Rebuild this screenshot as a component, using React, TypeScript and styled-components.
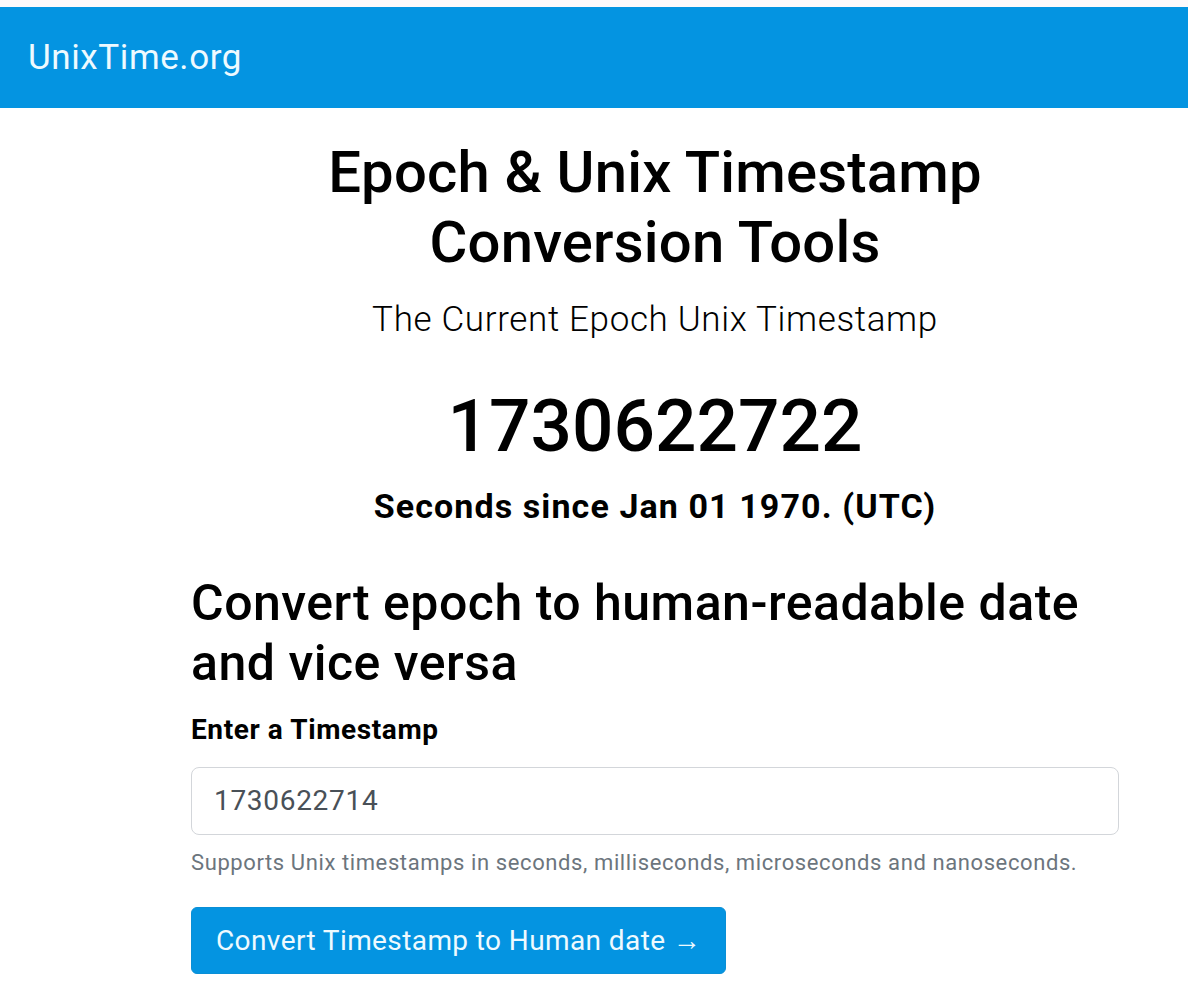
import React from "react";
import styled, { createGlobalStyle } from "styled-components";

const Global = createGlobalStyle`
  html, body { margin: 0; padding: 0; background: #ffffff; }
  body { font-family: Roboto, "Noto Sans", "Liberation Sans", sans-serif; color: #000; }
  * { box-sizing: border-box; }
`;

const Page = styled.div`
  padding-top: 7px;
  background: #fdf9fb;
  min-height: 993px;
`;

const Navbar = styled.header`
  height: 101px;
  background: #0494e1;
  display: flex;
  align-items: center;
  padding-left: 28px;
`;

const Brand = styled.a`
  color: #eefaff;
  font-size: 35px;
  font-weight: 400;
  letter-spacing: 0.6px;
  text-decoration: none;
  line-height: 1;
  margin-top: 0;
`;

const Main = styled.main`
  background: #ffffff;
  padding: 30px 0 20px 191px;
`;

const Container = styled.div`
  width: 928px;
  display: flex;
  flex-direction: column;
`;

const Hero = styled.section`
  display: flex;
  flex-direction: column;
  align-items: center;
  text-align: center;
`;

const Title = styled.h1`
  margin: 0;
  font-size: 58px;
  font-weight: 500;
  line-height: 1.2;
  letter-spacing: 0.2px;
  width: 680px;
`;

const Lead = styled.p`
  margin: 22px 0 0;
  font-size: 35px;
  font-weight: 300;
  line-height: 1.2;
  letter-spacing: 0.65px;
`;

const BigNumber = styled.div`
  margin-top: 42px;
  font-size: 73px;
  font-weight: 500;
  line-height: 1.2;
`;

const Since = styled.div`
  margin-top: 15px;
  font-size: 34px;
  font-weight: 700;
  line-height: 1.2;
  letter-spacing: 1.1px;
`;

const SectionTitle = styled.h2`
  margin: 46px 0 0;
  font-size: 50px;
  font-weight: 500;
  line-height: 1.2;
  letter-spacing: 0.5px;
`;

const Label = styled.label`
  margin-top: 16px;
  font-size: 28px;
  font-weight: 700;
  line-height: 1.5;
  letter-spacing: 0.6px;
`;

const Input = styled.input`
  margin-top: 16px;
  width: 100%;
  height: 68px;
  padding: 0 22px;
  font-family: inherit;
  font-size: 28px;
  letter-spacing: 0.7px;
  color: #495057;
  border: 1.5px solid #d3d6da;
  border-radius: 8px;
  background: #fff;
  outline: none;
`;

const Help = styled.small`
  margin-top: 11px;
  font-size: 22px;
  line-height: 1.5;
  letter-spacing: 0.6px;
  color: #6c757d;
`;

const Button = styled.button`
  margin-top: 28px;
  align-self: flex-start;
  height: 67px;
  padding: 0 24px;
  font-family: inherit;
  font-size: 28px;
  font-weight: 400;
  letter-spacing: 0.4px;
  color: #eefaff;
  background: #0494e1;
  border: 1px solid #0a8fd6;
  border-radius: 6px;
  cursor: pointer;
`;

export default function App() {
  return (
    <>
      <Global />
      <Page>
        <Navbar>
          <Brand href="#">UnixTime.org</Brand>
        </Navbar>
        <Main>
          <Container>
            <Hero>
              <Title>Epoch &amp; Unix Timestamp Conversion Tools</Title>
              <Lead>The Current Epoch Unix Timestamp</Lead>
              <BigNumber>1730622722</BigNumber>
              <Since>Seconds since Jan 01 1970. (UTC)</Since>
            </Hero>
            <SectionTitle>Convert epoch to human-readable date and vice versa</SectionTitle>
            <Label htmlFor="ts">Enter a Timestamp</Label>
            <Input id="ts" defaultValue="1730622714" />
            <Help>Supports Unix timestamps in seconds, milliseconds, microseconds and nanoseconds.</Help>
            <Button>Convert Timestamp to Human date →</Button>
          </Container>
        </Main>
      </Page>
    </>
  );
}
